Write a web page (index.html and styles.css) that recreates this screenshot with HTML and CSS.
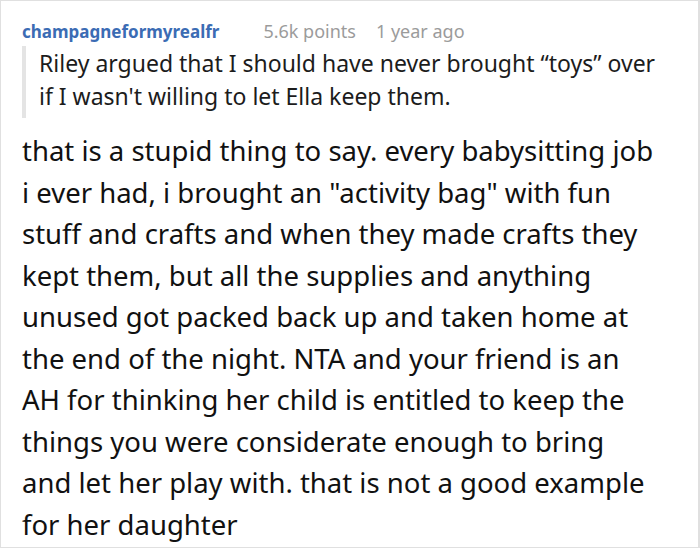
FILE: index.html
```html
<!DOCTYPE html>
<html lang="en">
<head>
<meta charset="utf-8">
<link rel="stylesheet" href="styles.css">
</head>
<body>
<div class="frame">
  <div class="meta">
    <span class="author">champagneformyrealfr</span>
    <span class="info points">5.6k points</span>
    <span class="info age">1 year ago</span>
  </div>
  <blockquote class="quote">Riley argued that I should have never brought “toys” over<br>if I wasn't willing to let Ella keep them.</blockquote>
  <p class="body">that is a stupid thing to say. every babysitting job<br>i ever had, i brought an "activity bag" with fun<br>stuff and crafts and when they made crafts they<br>kept them, but all the supplies and anything<br>unused got packed back up and taken home at<br>the end of the night. NTA and your friend is an<br>AH for thinking her child is entitled to keep the<br>things you were considerate enough to bring<br>and let her play with. that is not a good example<br>for her daughter</p>
</div>
</body>
</html>
```
FILE: styles.css
```css
html, body {
  margin: 0;
  padding: 0;
  background: #fff;
}
.frame {
  width: 700px;
  height: 548px;
  box-sizing: border-box;
  border: 1px solid #e0e0e0;
  border-right-width: 2px;
  overflow: hidden;
  padding: 17px 0 0 21px;
  font-family: "Noto Sans", "Open Sans", sans-serif;
}
.meta {
  display: flex;
  align-items: baseline;
  font-size: 18px;
  line-height: 26px;
}
.author {
  color: #3b6cb4;
  font-weight: 700;
  font-size: 17px;
}
.info {
  color: #9b9b9b;
}
.points {
  margin-left: 44px;
}
.age {
  margin-left: 20px;
}
.quote {
  margin: 1px 0 0 0;
  padding: 1px 0 5px 13px;
  border-left: 4px solid #e4e4e4;
  font-size: 23px;
  line-height: 33px;
  color: #1c1c1c;
  white-space: nowrap;
}
.body {
  margin: 12px 0 0;
  font-size: 27.5px;
  line-height: 41.5px;
  color: #111;
  white-space: nowrap;
}
```
